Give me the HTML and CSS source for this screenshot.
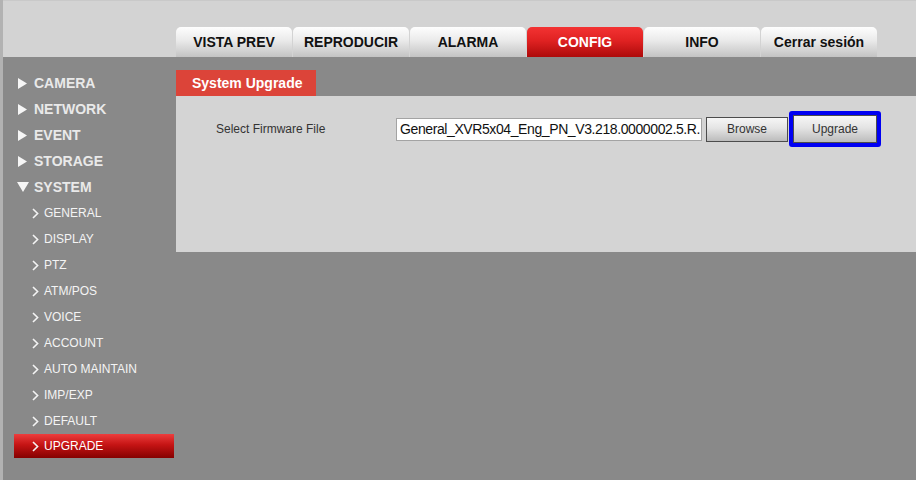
FILE: index.html
```html
<!doctype html>
<html lang="es">
  <head>
    <meta charset="UTF-8" />
    <title>Config - System Upgrade</title>
    <link rel="stylesheet" href="styles.css">
  </head>
  <body>
    <header class="topbar">
      <nav class="tabs">
        <a class="tab">VISTA PREV</a>
        <a class="tab">REPRODUCIR</a>
        <a class="tab">ALARMA</a>
        <a class="tab active">CONFIG</a>
        <a class="tab">INFO</a>
        <a class="tab">Cerrar sesión</a>
      </nav>
    </header>

    <div class="layout">
      <aside class="sidebar">
        <ul class="menu">
          <li class="menu-item">
            <svg class="tri" width="9" height="11" viewBox="0 0 9 11"><path d="M0 0 L9 5.5 L0 11 Z" /></svg>
            CAMERA
          </li>
          <li class="menu-item">
            <svg class="tri" width="9" height="11" viewBox="0 0 9 11"><path d="M0 0 L9 5.5 L0 11 Z" /></svg>
            NETWORK
          </li>
          <li class="menu-item">
            <svg class="tri" width="9" height="11" viewBox="0 0 9 11"><path d="M0 0 L9 5.5 L0 11 Z" /></svg>
            EVENT
          </li>
          <li class="menu-item">
            <svg class="tri" width="9" height="11" viewBox="0 0 9 11"><path d="M0 0 L9 5.5 L0 11 Z" /></svg>
            STORAGE
          </li>
          <li class="menu-item open">
            <svg class="tri down" width="12" height="10" viewBox="0 0 12 10"><path d="M0 0 L12 0 L6 10 Z" /></svg>
            SYSTEM
          </li>
          <li class="sub-item"><svg class="chev" width="7" height="11" viewBox="0 0 7 11"><path d="M1 1 L5.6 5.5 L1 10" /></svg>GENERAL</li>
          <li class="sub-item"><svg class="chev" width="7" height="11" viewBox="0 0 7 11"><path d="M1 1 L5.6 5.5 L1 10" /></svg>DISPLAY</li>
          <li class="sub-item"><svg class="chev" width="7" height="11" viewBox="0 0 7 11"><path d="M1 1 L5.6 5.5 L1 10" /></svg>PTZ</li>
          <li class="sub-item"><svg class="chev" width="7" height="11" viewBox="0 0 7 11"><path d="M1 1 L5.6 5.5 L1 10" /></svg>ATM/POS</li>
          <li class="sub-item"><svg class="chev" width="7" height="11" viewBox="0 0 7 11"><path d="M1 1 L5.6 5.5 L1 10" /></svg>VOICE</li>
          <li class="sub-item"><svg class="chev" width="7" height="11" viewBox="0 0 7 11"><path d="M1 1 L5.6 5.5 L1 10" /></svg>ACCOUNT</li>
          <li class="sub-item"><svg class="chev" width="7" height="11" viewBox="0 0 7 11"><path d="M1 1 L5.6 5.5 L1 10" /></svg>AUTO MAINTAIN</li>
          <li class="sub-item"><svg class="chev" width="7" height="11" viewBox="0 0 7 11"><path d="M1 1 L5.6 5.5 L1 10" /></svg>IMP/EXP</li>
          <li class="sub-item"><svg class="chev" width="7" height="11" viewBox="0 0 7 11"><path d="M1 1 L5.6 5.5 L1 10" /></svg>DEFAULT</li>
          <li class="sub-item selected"><svg class="chev" width="7" height="11" viewBox="0 0 7 11"><path d="M1 1 L5.6 5.5 L1 10" /></svg>UPGRADE</li>
        </ul>
      </aside>

      <main class="content">
        <div class="section-tab">System Upgrade</div>
        <div class="panel">
          <div class="form-row">
            <label class="field-label" for="firmware">Select Firmware File</label>
            <input id="firmware" class="file-input" type="text" value="General_XVR5x04_Eng_PN_V3.218.0000002.5.R.180323.bin" readonly />
            <button class="btn">Browse</button>
            <span class="focus-ring"><button class="btn btn-upgrade">Upgrade</button></span>
          </div>
        </div>
      </main>
    </div>
  </body>
</html>
```

FILE: styles.css
```css
:root {
  --header-bg: #d3d3d3;
  --page-bg: #898989;
  --panel-bg: #d4d4d4;
  --edge: #b2b2b2;
  --menu-text: #e9e9e9;
  --red: #dc4439;
}

* {
  box-sizing: border-box;
  margin: 0;
  padding: 0;
}

body {
  font-family: "Liberation Sans", Arial, sans-serif;
  background-color: var(--page-bg);
  border-left: 3px solid var(--edge);
  height: 480px;
  overflow: hidden;
}

.topbar {
  height: 57px;
  background-color: var(--header-bg);
  border-top: 1px solid #c9c9c9;
  display: flex;
  align-items: flex-end;
  padding-left: 173px;
}

.tabs {
  display: flex;
  gap: 1px;
}

.tab {
  width: 116px;
  height: 30px;
  line-height: 30px;
  text-align: center;
  font-size: 14px;
  font-weight: bold;
  color: #111;
  border-radius: 5px 5px 0 0;
  background: linear-gradient(#fefefe, #eaeaea 45%, #c3c3c3);
}

.tab.active {
  color: #fff;
  background: linear-gradient(#f33333, #e02222 45%, #ad0a0a);
}

.layout {
  display: flex;
}

.sidebar {
  width: 173px;
  flex-shrink: 0;
  padding-top: 14px;
}

.menu {
  list-style: none;
}

.menu-item,
.sub-item {
  height: 24px;
  margin-bottom: 2px;
  display: flex;
  align-items: center;
}

.menu-item {
  padding-left: 15px;
  gap: 7px;
  font-size: 14px;
  font-weight: bold;
  color: var(--menu-text);
}

.tri {
  fill: #f6f6f6;
}

.tri.down {
  margin-left: -1px;
  margin-right: -2px;
}

.sub-item {
  padding-left: 29px;
  gap: 5px;
  font-size: 12px;
  color: #f4f4f4;
}

.chev {
  fill: none;
  stroke: #f4f4f4;
  stroke-width: 1.6;
}

.sub-item.selected {
  margin-top: -1px;
  margin-left: 11px;
  width: 160px;
  padding-left: 18px;
  color: #fff;
  background: linear-gradient(#ec3d3d, #c51414 45%, #850000);
}

.content {
  flex: 1;
  padding-top: 13px;
}

.section-tab {
  width: 140px;
  height: 26px;
  line-height: 26px;
  padding-left: 16px;
  font-size: 14px;
  font-weight: bold;
  color: #fff;
  background-color: var(--red);
}

.panel {
  height: 156px;
  background-color: var(--panel-bg);
  padding: 14px 0 0 40px;
}

.form-row {
  display: flex;
  align-items: center;
  height: 38px;
}

.field-label {
  width: 180px;
  font-size: 12px;
  color: #333;
}

.file-input {
  width: 306px;
  height: 23px;
  padding: 0 1px 0 3px;
  border: 1px solid #a3a3a3;
  background: #fff;
  font-family: inherit;
  font-size: 14px;
  letter-spacing: -0.4px;
  color: #111;
  outline: none;
}

.btn {
  width: 82px;
  height: 25px;
  margin-left: 4px;
  border: 1px solid #4c4c4c;
  background: linear-gradient(#f6f6f6, #e4e4e4 45%, #bcbcbc);
  font-family: inherit;
  font-size: 12px;
  color: #333;
}

.focus-ring {
  display: flex;
  margin-left: 1px;
  border: 4px solid #0000f2;
  border-radius: 3px;
}

.btn-upgrade {
  width: 84px;
  height: 28px;
  margin-left: 0;
}
```
